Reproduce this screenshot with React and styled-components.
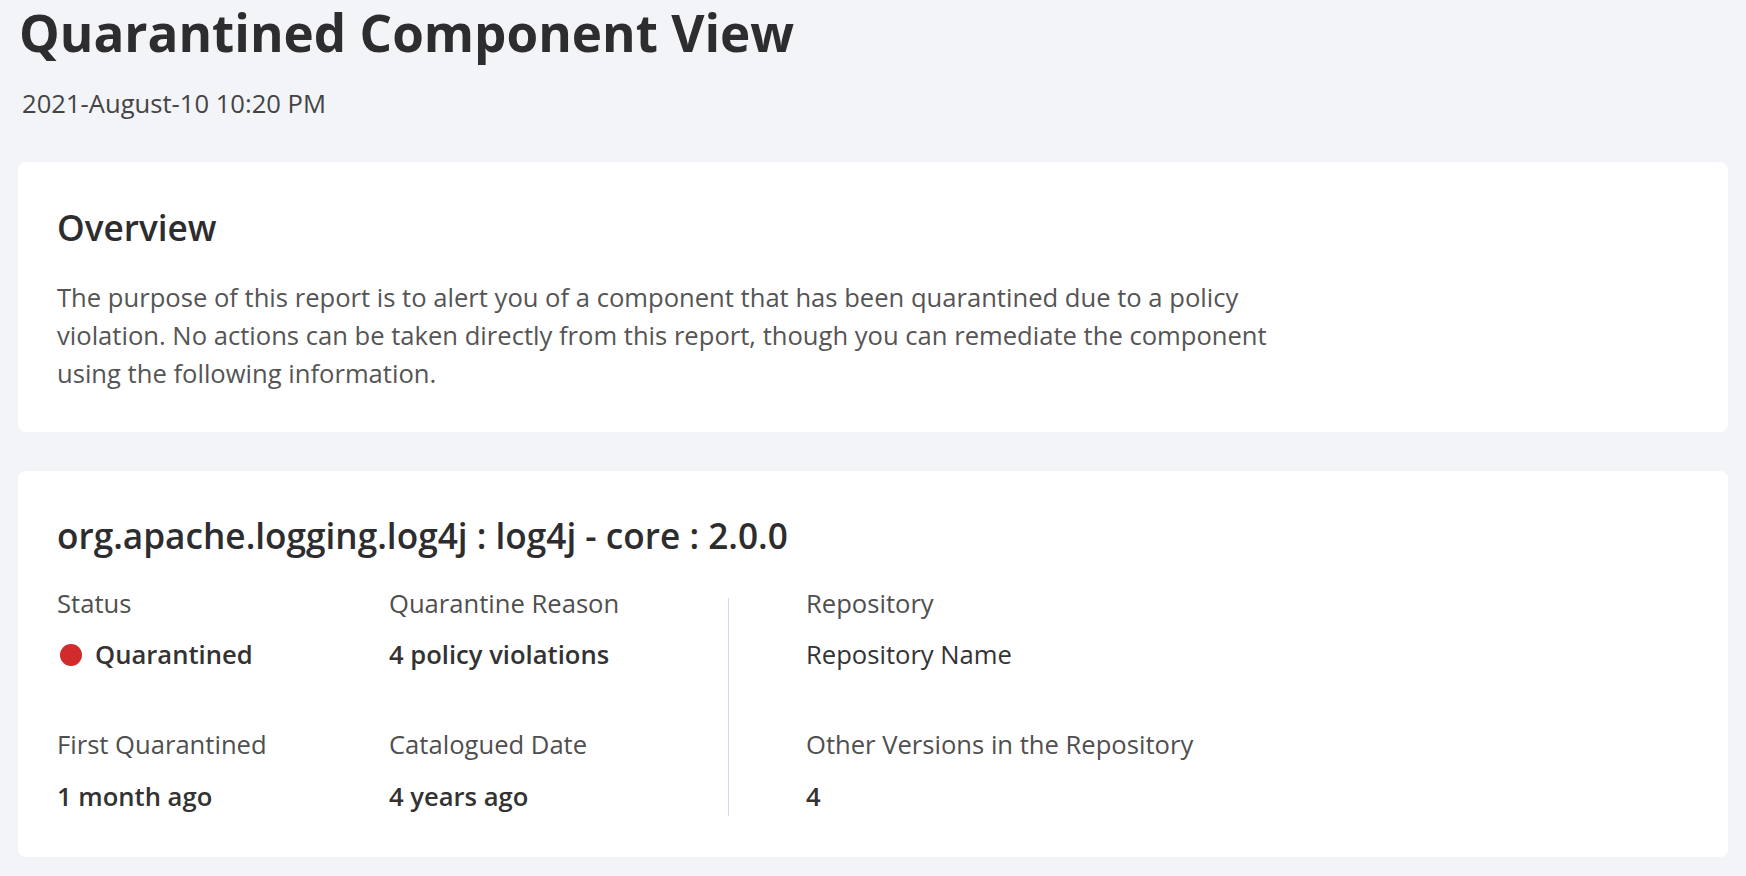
import React from "react";
import styled, { createGlobalStyle } from "styled-components";

const GlobalStyle = createGlobalStyle`
  html, body {
    margin: 0;
    padding: 0;
    background: #f3f4f8;
  }
  body {
    font-family: "Open Sans", "Noto Sans", sans-serif;
    color: #333;
  }
`;

const Page = styled.div`
  padding: 2px 18px 18px;
`;

const Title = styled.h1`
  margin: 0 0 0 1px;
  font-size: 51.2px;
  line-height: 1.2;
  font-weight: 700;
  color: #2d2d2f;
`;

const DateLine = styled.div`
  margin: 22px 0 38px;
  padding-left: 4px;
  font-size: 25.6px;
  line-height: 38.4px;
  color: #444;
`;

const Card = styled.section`
  background: #fff;
  border-radius: 8px;
  padding: ${(p) => p.$pad || "39px 39px 38px"};
  margin-bottom: 39px;
`;

const CardTitle = styled.h2`
  margin: 0;
  font-size: 35.2px;
  line-height: 52.8px;
  font-weight: 600;
  color: #2d2d2f;
`;

const Paragraph = styled.p`
  margin: 25px 0 0;
  max-width: 1220px;
  font-size: 25.6px;
  line-height: 38.4px;
  color: #555;
`;

const Details = styled.div`
  display: flex;
  margin-top: 23px;
`;

const Grid = styled.div`
  display: grid;
  grid-template-columns: ${(p) => p.$cols};
  row-gap: 52px;
`;

const Divider = styled.div`
  width: 1px;
  background: #d3d7ea;
  margin: 13px 77px 0 7px;
`;

const Field = styled.div`
  display: flex;
  flex-direction: column;
  gap: 13px;
`;

const Label = styled.div`
  font-size: 25.6px;
  line-height: 38.4px;
  color: #4f4f4f;
`;

const Value = styled.div`
  display: flex;
  align-items: center;
  gap: 13px;
  font-size: 25.6px;
  line-height: 38.4px;
  font-weight: ${(p) => (p.$light ? 400 : 600)};
  color: #333;
`;

const Dot = styled.span`
  width: 22px;
  height: 22px;
  border-radius: 50%;
  background: #d22b2b;
  margin-left: 3px;
`;

const InfoField = ({ label, children, light }) => (
  <Field>
    <Label>{label}</Label>
    <Value $light={light}>{children}</Value>
  </Field>
);

export default function App() {
  return (
    <>
      <GlobalStyle />
      <Page>
        <Title>Quarantined Component View</Title>
        <DateLine>2021-August-10 10:20 PM</DateLine>

        <Card>
          <CardTitle>Overview</CardTitle>
          <Paragraph>
            The purpose of this report is to alert you of a component that has
            been quarantined due to a policy violation. No actions can be taken
            directly from this report, though you can remediate the component
            using the following information.
          </Paragraph>
        </Card>

        <Card $pad="38px 39px 41px">
          <CardTitle>org.apache.logging.log4j : log4j - core : 2.0.0</CardTitle>
          <Details>
            <Grid $cols="332px 332px">
              <InfoField label="Status">
                <Dot />
                Quarantined
              </InfoField>
              <InfoField label="Quarantine Reason">4 policy violations</InfoField>
              <InfoField label="First Quarantined">1 month ago</InfoField>
              <InfoField label="Catalogued Date">4 years ago</InfoField>
            </Grid>
            <Divider />
            <Grid $cols="1fr">
              <InfoField label="Repository" light>
                Repository Name
              </InfoField>
              <InfoField label="Other Versions in the Repository">4</InfoField>
            </Grid>
          </Details>
        </Card>
      </Page>
    </>
  );
}
